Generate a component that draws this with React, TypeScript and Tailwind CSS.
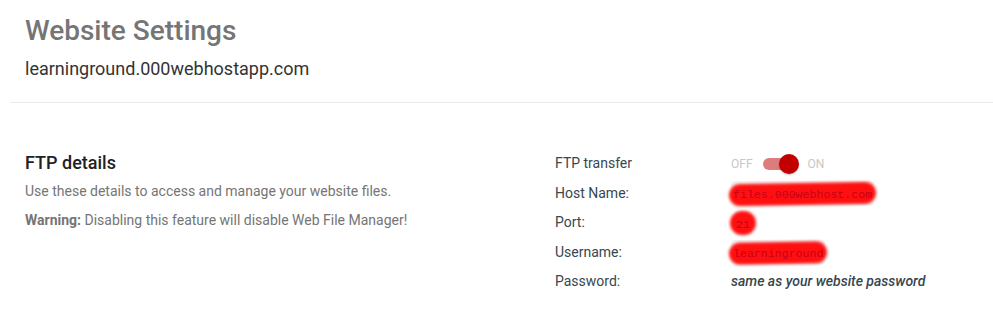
import type { ReactNode } from "react";

const FONT = "font-['Roboto','Liberation_Sans',sans-serif]";

function Redacted({ children, wide }: { children: ReactNode; wide?: boolean }) {
  return (
    <span className="relative inline-block px-0.5">
      <span className="absolute inset-0 rounded-sm bg-[#f3f3f3]" />
      <span
        className={
          wide
            ? "absolute -left-0.5 -right-0.5 top-0.5 bottom-0 -rotate-1 rounded-full bg-[#ff1010] blur-[1.5px]"
            : "absolute -left-1 -right-1 top-0 bottom-0 rounded-full bg-[#ff1010] blur-[1.5px]"
        }
      />
      <code className="relative font-['Liberation_Mono','DejaVu_Sans_Mono',monospace] text-[11.6px] text-[#c80018]">
        {children}
      </code>
    </span>
  );
}

function Row({ label, children }: { label: string; children: ReactNode }) {
  return (
    <div className="flex h-[29.5px] items-center">
      <div className="w-[175px] text-[14px] text-[#37474f]">{label}</div>
      <div className="flex items-center">{children}</div>
    </div>
  );
}

export default function App() {
  return (
    <div className={`${FONT} h-[328px] w-[993px] bg-white`}>
      <div className="px-[25px] pt-[13px]">
        <h1 className="text-[28px] font-medium leading-[36px] text-[#757575]">Website Settings</h1>
        <p className="mt-[8px] text-[18px] leading-[24px] text-[#333]">learninground.000webhostapp.com</p>
      </div>
      <div className="ml-[10px] mt-[21px] border-t border-[#ebebeb]" />

      <div className="flex pt-[48px]">
        <div className="w-[555px] pl-[25px]">
          <h2 className="text-[18px] font-medium leading-[24px] text-[#212121]">FTP details</h2>
          <p className="mt-[6px] text-[14px] leading-[20px] text-[#757575]">
            Use these details to access and manage your website files.
          </p>
          <p className="mt-[9px] text-[14px] leading-[20px] text-[#757575]">
            <span className="font-bold">Warning:</span> Disabling this feature will disable Web File Manager!
          </p>
        </div>

        <div className="-mt-[2px]">
          <Row label="FTP transfer">
            <span className="pl-[1px] text-[12px] text-[#c7c7c7]">OFF</span>
            <span className="relative mx-[10px] h-[12px] w-[34px] rounded-full bg-[#dd7c7c]">
              <span className="absolute -top-[4px] right-[-2px] h-[20px] w-[20px] rounded-full bg-[#c20000] shadow-[0_1px_2px_rgba(0,0,0,0.25)]" />
            </span>
            <span className="pl-[1px] text-[12px] text-[#c7c7c7]">ON</span>
          </Row>
          <Row label="Host Name:">
            <span className="pl-[1px]">
              <Redacted wide>files.000webhost.com</Redacted>
            </span>
          </Row>
          <Row label="Port:">
            <span className="pl-[4px]">
              <Redacted>21</Redacted>
            </span>
          </Row>
          <Row label="Username:">
            <span className="pl-[1px]">
              <Redacted wide>learninground</Redacted>
            </span>
          </Row>
          <Row label="Password:">
            <span className="pl-[1px] text-[14px] font-medium italic text-[#37474f]">same as your website password</span>
          </Row>
        </div>
      </div>
    </div>
  );
}
